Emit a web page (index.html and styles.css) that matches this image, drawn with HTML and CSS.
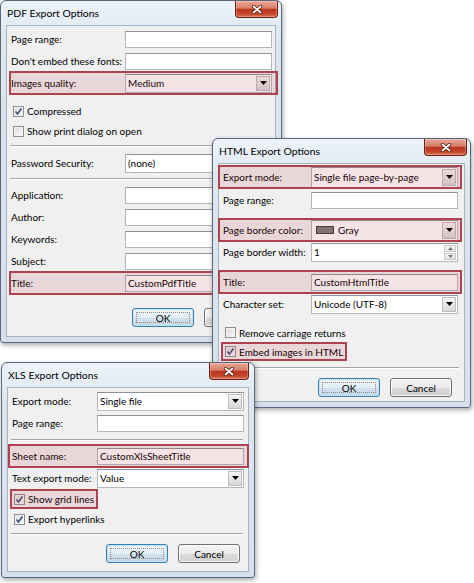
FILE: index.html
```html
<!DOCTYPE html>
<html lang="en">
<head>
    <meta charset="UTF-8">
    <meta name="viewport" content="width=device-width, initial-scale=1.0">
    <title>Export Options</title>
    <link rel="stylesheet" href="styles.css">
</head>
<body>
    <!-- PDF dialog (bottom of the stack) -->
    <div class="window pdf">
        <div class="titlebar">
            <span class="title">PDF Export Options</span>
            <span class="close"><svg width="12" height="9" viewBox="0 0 12 9"><path d="M2.5 1.5L9.5 7.5M9.5 1.5L2.5 7.5" stroke="#5b1b10" stroke-width="3.4" stroke-linecap="round"/><path d="M2.5 1.5L9.5 7.5M9.5 1.5L2.5 7.5" stroke="#fff" stroke-width="1.8" stroke-linecap="round"/></svg></span>
        </div>
        <div class="client">
            <div class="row"><span class="lab">Page range:</span><span class="field"></span></div>
            <div class="row"><span class="lab">Don't embed these fonts:</span><span class="field"></span></div>
            <div class="row hl"><span class="lab">Images quality:</span><span class="field combo">Medium<span class="drop"><svg width="7" height="4" viewBox="0 0 7 4"><path d="M0 0H7L3.5 4Z"/></svg></span></span></div>
            <div class="checks">
                <div class="check"><span class="box"><svg width="9" height="9" viewBox="0 0 9 9"><path d="M1.5 4.5L3.5 7L7.5 1.5"/></svg></span>Compressed</div>
                <div class="check"><span class="box"></span>Show print dialog on open</div>
            </div>
            <hr class="sep">
            <div class="row pass"><span class="lab">Password Security:</span><span class="field combo">(none)<span class="drop"><svg width="7" height="4" viewBox="0 0 7 4"><path d="M0 0H7L3.5 4Z"/></svg></span></span></div>
            <hr class="sep">
            <div class="row info"><span class="lab">Application:</span><span class="field"></span></div>
            <div class="row"><span class="lab">Author:</span><span class="field"></span></div>
            <div class="row"><span class="lab">Keywords:</span><span class="field"></span></div>
            <div class="row"><span class="lab">Subject:</span><span class="field"></span></div>
            <div class="row hl"><span class="lab">Title:</span><span class="field">CustomPdfTitle</span></div>
            <div class="buttons">
                <span class="btn default">OK</span>
                <span class="btn">Cancel</span>
            </div>
        </div>
    </div>

    <!-- HTML dialog -->
    <div class="window html">
        <div class="titlebar">
            <span class="title">HTML Export Options</span>
            <span class="close"><svg width="12" height="9" viewBox="0 0 12 9"><path d="M2.5 1.5L9.5 7.5M9.5 1.5L2.5 7.5" stroke="#5b1b10" stroke-width="3.4" stroke-linecap="round"/><path d="M2.5 1.5L9.5 7.5M9.5 1.5L2.5 7.5" stroke="#fff" stroke-width="1.8" stroke-linecap="round"/></svg></span>
        </div>
        <div class="client">
            <div class="row hl"><span class="lab">Export mode:</span><span class="field combo tall">Single file page-by-page<span class="drop"><svg width="7" height="4" viewBox="0 0 7 4"><path d="M0 0H7L3.5 4Z"/></svg></span></span></div>
            <div class="row after-hl"><span class="lab">Page range:</span><span class="field"></span></div>
            <div class="row hl spaced"><span class="lab">Page border color:</span><span class="field combo tall"><span class="swatch"></span>Gray<span class="drop"><svg width="7" height="4" viewBox="0 0 7 4"><path d="M0 0H7L3.5 4Z"/></svg></span></span></div>
            <div class="row"><span class="lab">Page border width:</span><span class="field combo">1<span class="spin"><span><svg width="5" height="3" viewBox="0 0 5 3"><path d="M0 3H5L2.5 0Z"/></svg></span><span><svg width="5" height="3" viewBox="0 0 5 3"><path d="M0 0H5L2.5 3Z"/></svg></span></span></span></div>
            <div class="row hl spaced"><span class="lab">Title:</span><span class="field">CustomHtmlTitle</span></div>
            <div class="row"><span class="lab">Character set:</span><span class="field combo">Unicode (UTF-8)<span class="drop"><svg width="7" height="4" viewBox="0 0 7 4"><path d="M0 0H7L3.5 4Z"/></svg></span></span></div>
            <div class="checks">
                <div class="check"><span class="box"></span>Remove carriage returns</div>
                <div class="check hl"><span class="box"><svg width="9" height="9" viewBox="0 0 9 9"><path d="M1.5 4.5L3.5 7L7.5 1.5"/></svg></span>Embed images in HTML</div>
            </div>
            <hr class="sep">
            <div class="buttons">
                <span class="btn default">OK</span>
                <span class="btn">Cancel</span>
            </div>
        </div>
    </div>

    <!-- XLS dialog (top of the stack) -->
    <div class="window xls">
        <div class="titlebar">
            <span class="title">XLS Export Options</span>
            <span class="close"><svg width="12" height="9" viewBox="0 0 12 9"><path d="M2.5 1.5L9.5 7.5M9.5 1.5L2.5 7.5" stroke="#5b1b10" stroke-width="3.4" stroke-linecap="round"/><path d="M2.5 1.5L9.5 7.5M9.5 1.5L2.5 7.5" stroke="#fff" stroke-width="1.8" stroke-linecap="round"/></svg></span>
        </div>
        <div class="client">
            <div class="row"><span class="lab">Export mode:</span><span class="field combo">Single file<span class="drop"><svg width="7" height="4" viewBox="0 0 7 4"><path d="M0 0H7L3.5 4Z"/></svg></span></span></div>
            <div class="row"><span class="lab">Page range:</span><span class="field"></span></div>
            <hr class="sep">
            <div class="row hl sheet"><span class="lab">Sheet name:</span><span class="field">CustomXlsSheetTitle</span></div>
            <div class="row"><span class="lab">Text export mode:</span><span class="field combo">Value<span class="drop"><svg width="7" height="4" viewBox="0 0 7 4"><path d="M0 0H7L3.5 4Z"/></svg></span></span></div>
            <div class="checks">
                <div class="check hl"><span class="box"><svg width="9" height="9" viewBox="0 0 9 9"><path d="M1.5 4.5L3.5 7L7.5 1.5"/></svg></span>Show grid lines</div>
                <div class="check"><span class="box"><svg width="9" height="9" viewBox="0 0 9 9"><path d="M1.5 4.5L3.5 7L7.5 1.5"/></svg></span>Export hyperlinks</div>
            </div>
            <hr class="sep">
            <div class="buttons">
                <span class="btn default">OK</span>
                <span class="btn">Cancel</span>
            </div>
        </div>
    </div>
</body>
</html>
```

FILE: styles.css
```css
/* reset */
*{
    margin: 0;
    padding: 0;
    box-sizing: border-box;
}
body,html{
    height: 100%;
}
body{
    position: relative;
    overflow: hidden;
    background: #fff;
    font-family: Lato, "Open Sans", sans-serif;
    font-size: 10px;
    color: #000;
}

/* windows on the desktop */
.window{
    position: absolute;
    display: flex;
    flex-direction: column;
    padding: 0 5px 5px;
    border: 1px solid #5a6879;
    border-radius: 6px 6px 3px 3px;
    background: linear-gradient(#edf3f9, #dde6ef 40px, #d6e0ea);
    box-shadow: 1px 2px 5px rgba(0,0,0,0.35);
}
.pdf{
    left: 0;
    top: 0;
    width: 282px;
    height: 343px;
    --lab: 114px;
    --hl-l: 2px;
    --hl-r: -3px;
    --btn-r: 9px;
}
.html{
    left: 212px;
    top: 138px;
    width: 259px;
    height: 270px;
    --lab: 88px;
    --hl-l: -1px;
    --hl-r: 2px;
    --btn-r: 12px;
}
.xls{
    left: 1px;
    top: 362px;
    width: 254px;
    height: 216px;
    --lab: 85px;
    --hl-l: 0px;
    --hl-r: -1px;
    --btn-r: 8px;
}

.titlebar{
    height: 24px;
    display: flex;
    align-items: center;
    padding-left: 1px;
}
.title{
    font-size: 10.4px;
    color: #000;
}
.close{
    position: absolute;
    top: 0;
    right: 3px;
    width: 43px;
    height: 17px;
    display: flex;
    align-items: center;
    justify-content: center;
    border: 1px solid #6b2116;
    border-top: none;
    border-radius: 0 0 4px 4px;
    background: linear-gradient(#e8a797, #d67d69 45%, #bc3520 52%, #c5452b 80%, #db7656);
    box-shadow: inset 0 0 0 1px rgba(255,255,255,0.25);
}
.xls .close{
    right: 5px;
    width: 40px;
}

.client{
    flex: 1;
    display: flex;
    flex-direction: column;
    padding-top: 2px;
    background: #f0f0f0;
    border: 1px solid #a6b3c2;
}

/* label + field rows */
.row{
    position: relative;
    display: grid;
    grid-template-columns: var(--lab) 147px;
    align-items: center;
    height: 22px;
    padding-left: 4px;
    white-space: nowrap;
}
.hl::after{
    content: "";
    position: absolute;
    top: -1px;
    bottom: -1px;
    left: var(--hl-l);
    right: var(--hl-r);
    background: rgba(185,40,60,0.13);
    border: 2px solid #ad4351;
    pointer-events: none;
}
.after-hl{ margin-top: 1px; }
.spaced{ margin-top: 8px; }
.pass{ margin-top: 5px; }
.info{ margin-top: 4px; }
.sheet{ margin-top: 4px; }

.field{
    position: relative;
    display: flex;
    align-items: center;
    height: 17px;
    padding-left: 2px;
    background: #fff;
    border: 1px solid #b3b6bd;
    border-top-color: #8e9198;
}
.combo{ height: 19px; }
.tall{ height: 21px; }
.drop{
    position: absolute;
    top: 1px;
    right: 1px;
    bottom: 1px;
    width: 14px;
    display: flex;
    align-items: center;
    justify-content: center;
    background: linear-gradient(#f4f4f4, #d8d8d8);
    border: 1px solid #bdbdbd;
}
.drop svg{ fill: #000; }
.swatch{
    width: 18px;
    height: 8px;
    margin: 0 4px 0 2px;
    background: #7d7d7d;
    border: 1px solid #3c3c3c;
}
.spin{
    position: absolute;
    top: 1px;
    right: 1px;
    bottom: 1px;
    width: 12px;
    display: flex;
    flex-direction: column;
    gap: 1px;
}
.spin span{
    flex: 1;
    display: flex;
    align-items: center;
    justify-content: center;
    background: linear-gradient(#f6f6f6, #e2e2e2);
    border: 1px solid #c8c8c8;
}
.spin svg{ fill: #777; }

/* checkboxes */
.checks{
    display: flex;
    flex-direction: column;
}
.pdf .checks{ margin-top: 7px; }
.html .checks{ margin-top: 8px; }
.check{
    position: relative;
    display: flex;
    align-items: center;
    gap: 3px;
    width: max-content;
    height: 20px;
    padding: 0 4px 0 6px;
}
.html .check{ height: 19px; }
.check.hl::after{
    top: 0;
    bottom: 0;
    left: 2px;
    right: 0;
}
.box{
    width: 11px;
    height: 11px;
    border: 1px solid #8e8f8f;
    background: linear-gradient(135deg, #d9d9d9, #fbfbfb);
    box-shadow: inset 0 0 0 1px #f2f2f2;
}
.box svg{
    display: block;
    fill: none;
    stroke: #3f5179;
    stroke-width: 1.6;
}

.sep{
    height: 0;
    margin: 4px 5px 0 3px;
    border: 0;
    border-top: 1px solid #a3a3a3;
    border-bottom: 1px solid #fff;
}
.html .sep{ margin-top: 6px; }
.xls .sep:first-of-type{ margin-top: 5px; }

/* dialog buttons */
.buttons{
    display: flex;
    justify-content: flex-end;
    gap: 10px;
    padding-right: var(--btn-r);
    margin-top: 9px;
}
.pdf .buttons{ margin-top: 14px; }
.btn{
    position: relative;
    display: flex;
    align-items: center;
    justify-content: center;
    width: 62px;
    height: 19px;
    color: #000;
    border: 1px solid #707070;
    border-radius: 3px;
    background: linear-gradient(#f3f3f3, #ebebeb 50%, #dcdcdc 51%, #cfcfcf);
    box-shadow: inset 0 0 0 1px rgba(255,255,255,0.8);
}
.btn.default{
    border-color: #3c7fb1;
    background: linear-gradient(#eef5fa, #e3edf5 50%, #d3e1ec 51%, #c6d7e5);
    box-shadow: inset 0 0 0 1px #bfe4f8;
}
.btn.default::after{
    content: "";
    position: absolute;
    inset: 3px;
    border: 1px dotted #8a8a8a;
}
```
